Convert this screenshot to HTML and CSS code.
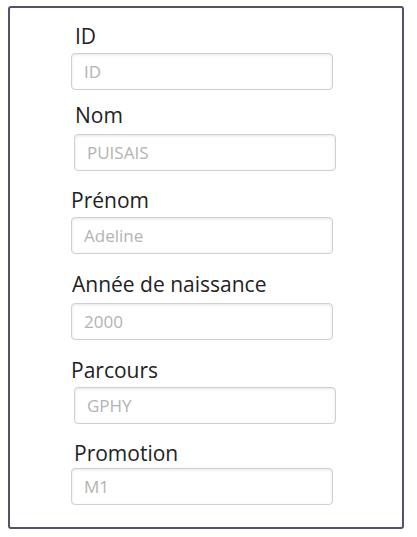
FILE: index.html
```html
<!DOCTYPE html>
<html lang="fr">
<head>
<meta charset="utf-8">
<title>Étudiant</title>
<link rel="stylesheet" href="styles.css">
</head>
<body>
<form class="card">
  <div class="field f-id">
    <label class="lbl lbl-r">ID</label>
    <input class="ctl" type="text" placeholder="ID">
  </div>
  <div class="field f-nom">
    <label class="lbl lbl-r">Nom</label>
    <input class="ctl ctl-r" type="text" placeholder="PUISAIS">
  </div>
  <div class="field f-prenom">
    <label class="lbl">Prénom</label>
    <input class="ctl" type="text" placeholder="Adeline">
  </div>
  <div class="field f-annee">
    <label class="lbl lbl-m">Année de naissance</label>
    <input class="ctl" type="text" placeholder="2000">
  </div>
  <div class="field f-parcours">
    <label class="lbl">Parcours</label>
    <input class="ctl ctl-r" type="text" placeholder="GPHY">
  </div>
  <div class="field f-promo">
    <label class="lbl lbl-p">Promotion</label>
    <input class="ctl" type="text" placeholder="M1">
  </div>
</form>
</body>
</html>
```

FILE: styles.css
```css
html, body {
  margin: 0;
  padding: 0;
  background: #ffffff;
}

body {
  font-family: "Open Sans", "Noto Sans", "Liberation Sans", sans-serif;
}

.card {
  box-sizing: border-box;
  width: 396px;
  height: 523px;
  margin: 6px 0 0 8px;
  padding: 16px 0 0 61px;
  border: 2px solid #55506c;
  border-radius: 3px;
  background: #fff;
  display: flex;
  flex-direction: column;
}

.field {
  display: flex;
  flex-direction: column;
  align-items: flex-start;
}

.lbl {
  font-size: 21px;
  line-height: 24px;
  color: #222;
  margin-left: 0;
}
.lbl-r { margin-left: 4px; }
.lbl-m { margin-left: 1px; }
.lbl-p { margin-left: 3px; }

.ctl {
  box-sizing: border-box;
  width: 262px;
  height: 37px;
  margin: 0;
  padding: 0 12px;
  border: 1px solid #cfcfcf;
  border-radius: 4px;
  box-shadow: inset 0 1px 3px rgba(0, 0, 0, 0.1);
  font-family: inherit;
  font-size: 17px;
  color: #555;
  background: #fff;
  outline: none;
}
.ctl::placeholder { color: #b3b3b3; }
.ctl-r { margin-left: 3px; }

.f-id .ctl { margin-top: 5px; }
.f-nom { margin-top: 13px; }
.f-nom .ctl { margin-top: 7px; }
.f-prenom { margin-top: 17px; }
.f-prenom .ctl { margin-top: 5px; }
.f-annee { margin-top: 18px; }
.f-annee .ctl { margin-top: 7px; }
.f-parcours { margin-top: 18px; }
.f-parcours .ctl { margin-top: 5px; }
.f-promo { margin-top: 17px; }
.f-promo .ctl { margin-top: 3px; }
```
